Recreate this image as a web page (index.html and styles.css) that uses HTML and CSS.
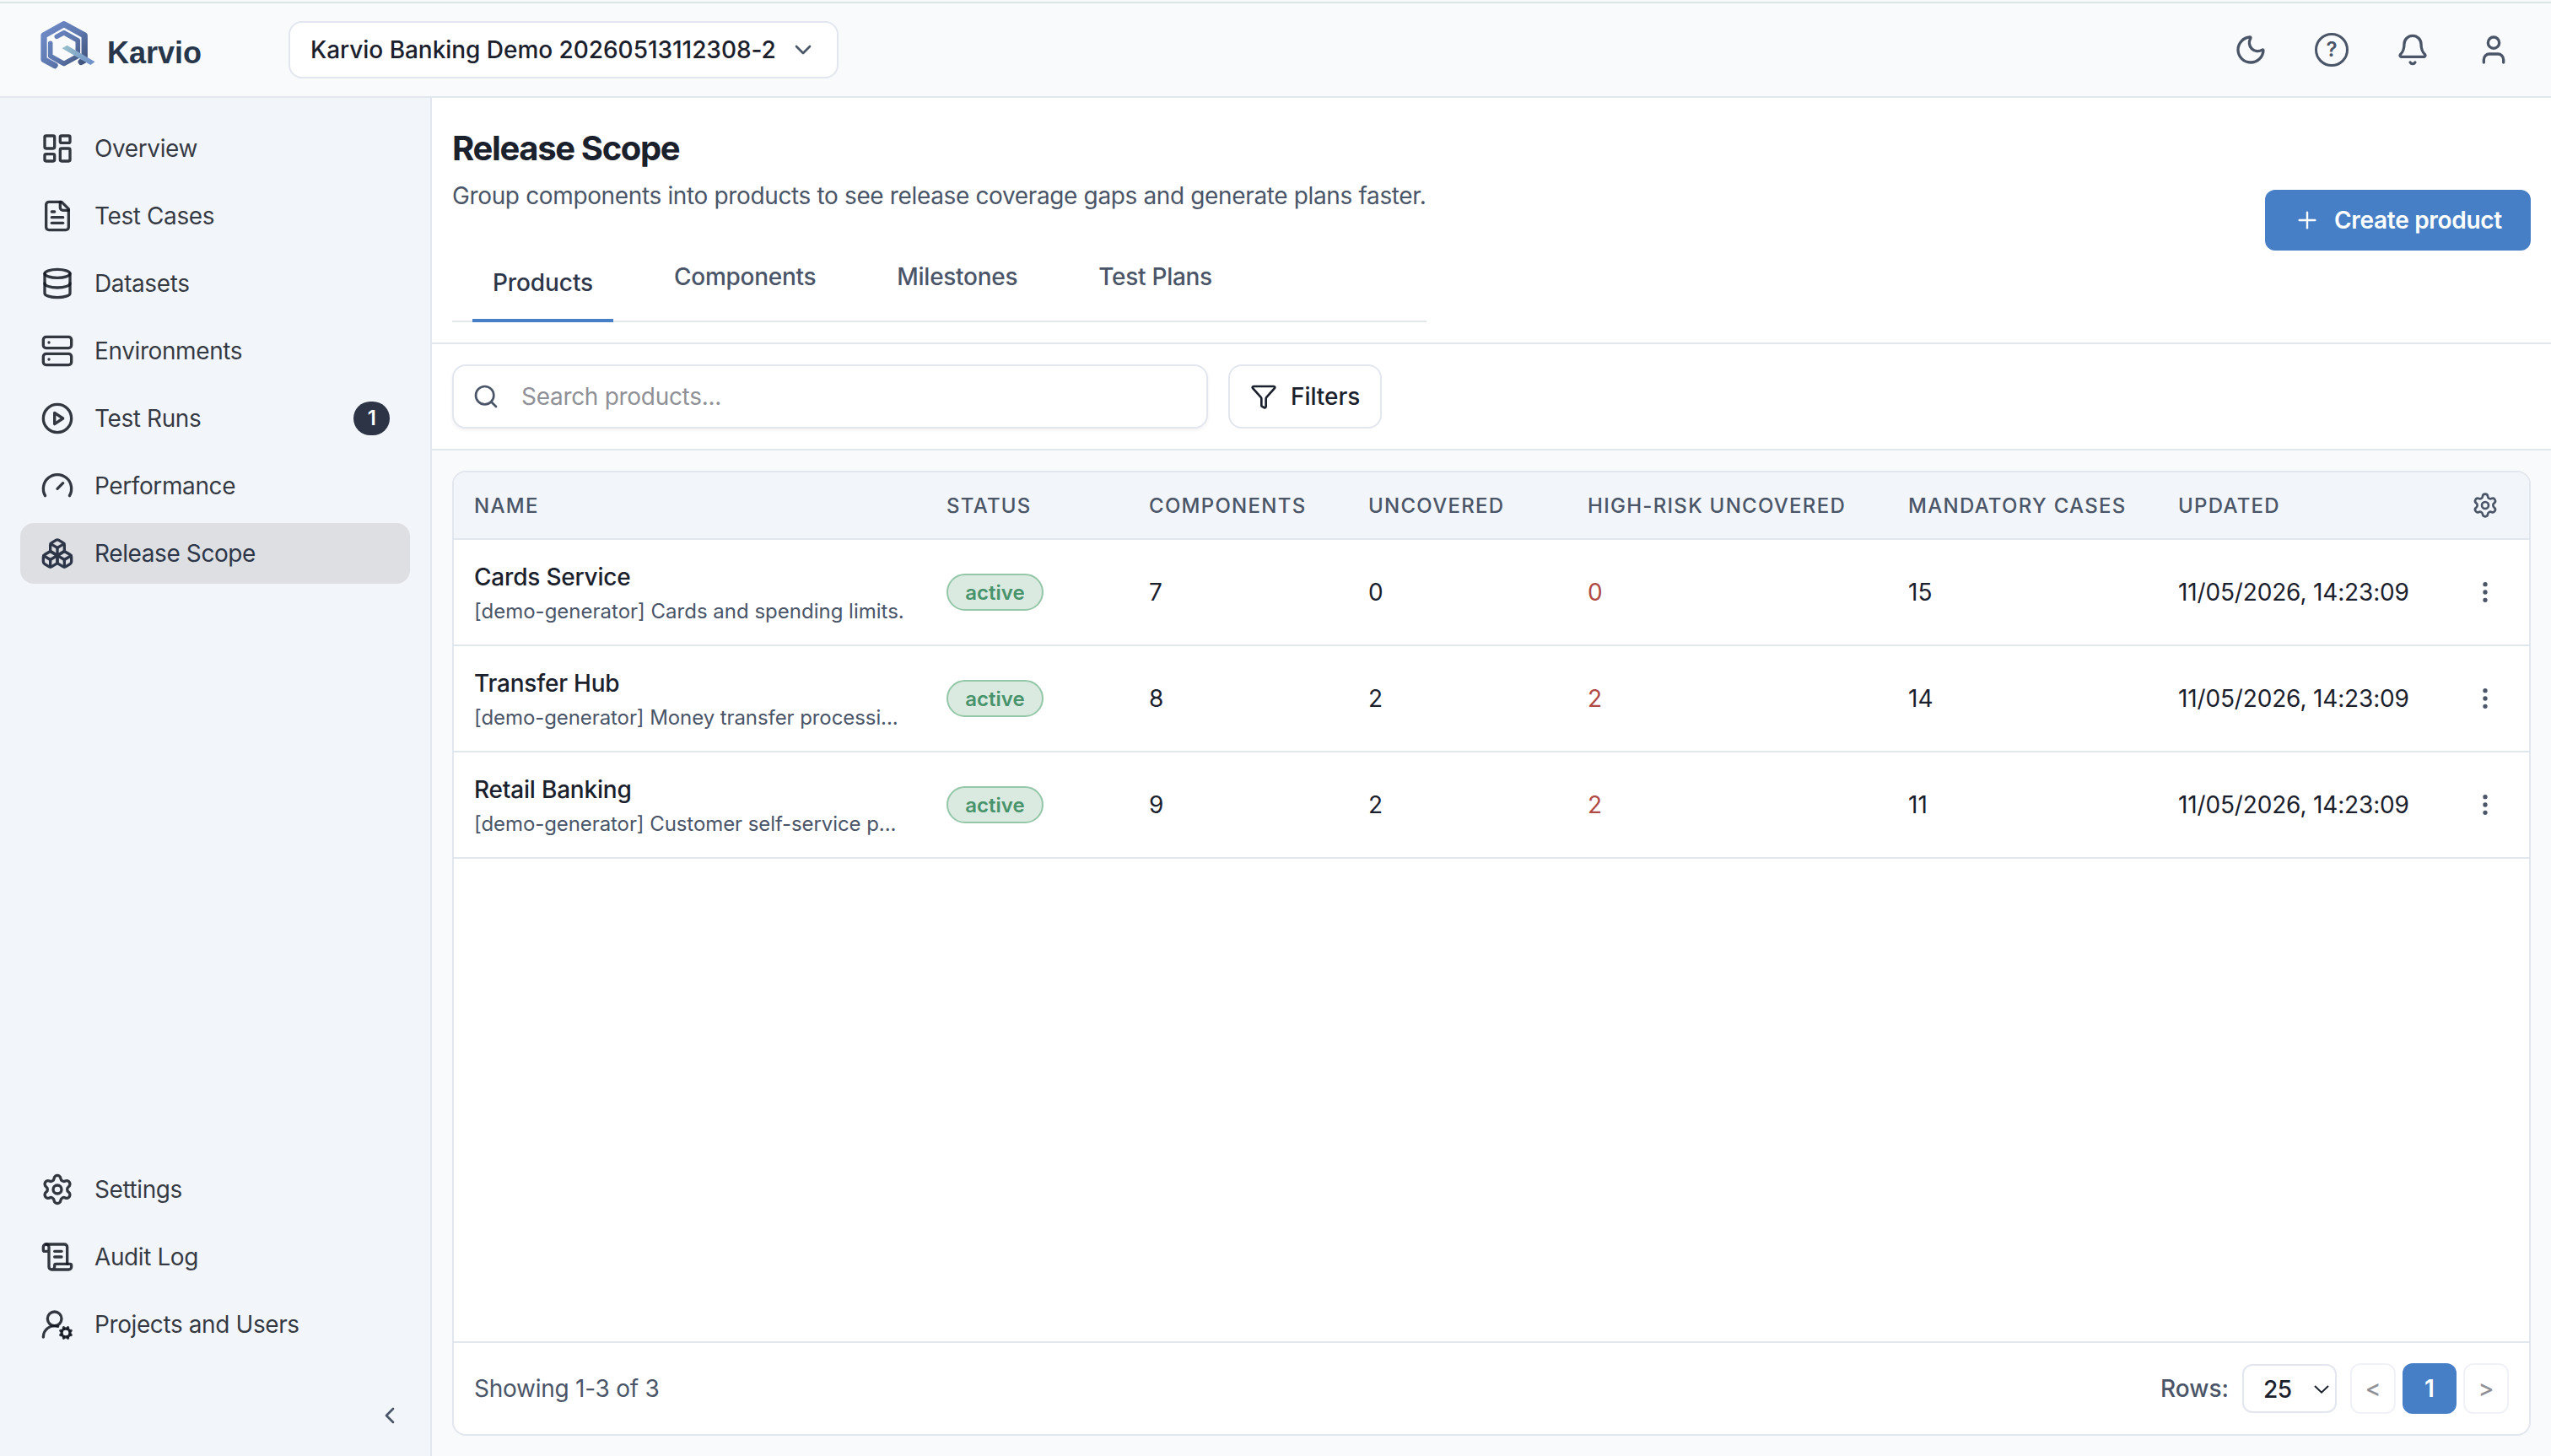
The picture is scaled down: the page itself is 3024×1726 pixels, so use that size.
FILE: index.html
```html
<!DOCTYPE html>
<html lang="en">
<head>
<meta charset="utf-8">
<title>Karvio – Release Scope</title>
<link rel="stylesheet" href="styles.css">
</head>
<body>
<div class="app">
  <header class="topbar">
    <div class="brand">
      <svg class="brand-mark" viewBox="48 24 66 60" fill="none" stroke-linecap="round" stroke-linejoin="round">
        <defs>
          <linearGradient id="hex" gradientUnits="userSpaceOnUse" x1="52" y1="34" x2="100" y2="76">
            <stop offset="0" stop-color="#6f89c6"/><stop offset=".55" stop-color="#5d77ae"/><stop offset="1" stop-color="#3f5278"/>
          </linearGradient>
          <linearGradient id="tail" gradientUnits="userSpaceOnUse" x1="75" y1="55" x2="111" y2="76">
            <stop offset="0" stop-color="#97c0ca"/><stop offset="1" stop-color="#6f8fc9"/>
          </linearGradient>
        </defs>
        <path stroke="url(#hex)" stroke-width="7.3" d="M65 77.6 52 70.6V42L75.8 28.6 100.2 42v29l-4 2.4"/>
        <path stroke="url(#hex)" stroke-width="5.6" d="M67.3 43.4l8.5-4.6 16.5 9.2v18.5l-16.5 9-16.1-9V51.4"/>
        <path fill="url(#tail)" d="M73.5 57.2l6-3.4 33 19.4-5.2 3.8z"/>
      </svg>
      <span class="brand-name">Karvio</span>
    </div>
    <button class="project-select">
      <span>Karvio Banking Demo 20260513112308-2</span>
      <svg class="icon icon-sm" viewBox="0 0 24 24"><path d="m6 9 6 6 6-6"/></svg>
    </button>
    <div class="top-actions">
      <svg class="icon" viewBox="0 0 24 24"><path d="M20.985 12.486a9 9 0 1 1-9.473-9.472c.405-.022.617.46.402.803a6 6 0 0 0 8.268 8.268c.344-.215.825-.004.803.401"/></svg>
      <span class="help">?</span>
      <svg class="icon" viewBox="0 0 24 24"><path d="M10.268 21a2 2 0 0 0 3.464 0"/><path d="M3.262 15.326A1 1 0 0 0 4 17h16a1 1 0 0 0 .74-1.673C19.41 13.956 18 12.499 18 8A6 6 0 0 0 6 8c0 4.499-1.411 5.956-2.738 7.326"/></svg>
      <svg class="icon" viewBox="0 0 24 24"><path d="M19 21v-2a4 4 0 0 0-4-4H9a4 4 0 0 0-4 4v2"/><circle cx="12" cy="7" r="4"/></svg>
    </div>
  </header>

  <div class="shell">
    <aside class="sidebar">
      <nav class="nav">
        <a class="nav-item"><svg class="icon" viewBox="0 0 24 24"><rect width="7" height="9" x="3" y="3" rx="1"/><rect width="7" height="5" x="14" y="3" rx="1"/><rect width="7" height="9" x="14" y="12" rx="1"/><rect width="7" height="5" x="3" y="16" rx="1"/></svg><span>Overview</span></a>
        <a class="nav-item"><svg class="icon" viewBox="0 0 24 24"><path d="M15 2H6a2 2 0 0 0-2 2v16a2 2 0 0 0 2 2h12a2 2 0 0 0 2-2V7Z"/><path d="M14 2v4a2 2 0 0 0 2 2h4"/><path d="M10 9H8"/><path d="M16 13H8"/><path d="M16 17H8"/></svg><span>Test Cases</span></a>
        <a class="nav-item"><svg class="icon" viewBox="0 0 24 24"><ellipse cx="12" cy="5" rx="9" ry="3"/><path d="M3 5V19A9 3 0 0 0 21 19V5"/><path d="M3 12A9 3 0 0 0 21 12"/></svg><span>Datasets</span></a>
        <a class="nav-item"><svg class="icon" viewBox="0 0 24 24"><rect width="20" height="8" x="2" y="2" rx="2"/><rect width="20" height="8" x="2" y="14" rx="2"/><path d="M6 6h.01"/><path d="M6 18h.01"/></svg><span>Environments</span></a>
        <a class="nav-item"><svg class="icon" viewBox="0 0 24 24"><circle cx="12" cy="12" r="10"/><path d="M10 8l6 4-6 4z"/></svg><span>Test Runs</span><b class="count">1</b></a>
        <a class="nav-item"><svg class="icon" viewBox="0 0 24 24"><path d="m12 14 4-4"/><path d="M3.34 19a10 10 0 1 1 17.32 0"/></svg><span>Performance</span></a>
        <a class="nav-item active"><svg class="icon" viewBox="0 0 24 24"><path d="M2.97 12.92A2 2 0 0 0 2 14.63v3.24a2 2 0 0 0 .97 1.71l3 1.8a2 2 0 0 0 2.06 0L12 19v-5.5l-5-3-4.03 2.42Z"/><path d="m7 16.5-4.74-2.85"/><path d="m7 16.5 5-3"/><path d="M7 16.5v5.17"/><path d="M12 13.5V19l3.97 2.38a2 2 0 0 0 2.06 0l3-1.8a2 2 0 0 0 .97-1.71v-3.24a2 2 0 0 0-.97-1.71L17 10.5l-5 3Z"/><path d="m17 16.5-5-3"/><path d="m17 16.5 4.74-2.85"/><path d="M17 16.5v5.17"/><path d="M7.97 4.42A2 2 0 0 0 7 6.13v4.37l5 3 5-3V6.13a2 2 0 0 0-.97-1.71l-3-1.8a2 2 0 0 0-2.06 0l-3 1.8Z"/><path d="M12 8 7.26 5.15"/><path d="m12 8 4.74-2.85"/><path d="M12 13.5V8"/></svg><span>Release Scope</span></a>
      </nav>
      <nav class="nav nav-bottom">
        <a class="nav-item"><svg class="icon" viewBox="0 0 24 24"><path d="M9.671 4.136a2.34 2.34 0 0 1 4.659 0 2.34 2.34 0 0 0 3.319 1.915 2.34 2.34 0 0 1 2.33 4.033 2.34 2.34 0 0 0 0 3.831 2.34 2.34 0 0 1-2.33 4.033 2.34 2.34 0 0 0-3.319 1.915 2.34 2.34 0 0 1-4.659 0 2.34 2.34 0 0 0-3.32-1.915 2.34 2.34 0 0 1-2.33-4.033 2.34 2.34 0 0 0 0-3.831A2.34 2.34 0 0 1 6.35 6.051a2.34 2.34 0 0 0 3.319-1.915"/><circle cx="12" cy="12" r="3"/></svg><span>Settings</span></a>
        <a class="nav-item"><svg class="icon" viewBox="0 0 24 24"><path d="M15 12h-5"/><path d="M15 8h-5"/><path d="M19 17V5a2 2 0 0 0-2-2H4"/><path d="M8 21h12a2 2 0 0 0 2-2v-1a1 1 0 0 0-1-1H11a1 1 0 0 0-1 1v1a2 2 0 1 1-4 0V5a2 2 0 1 0-4 0v2a1 1 0 0 0 1 1h3"/></svg><span>Audit Log</span></a>
        <a class="nav-item"><svg class="icon" viewBox="0 0 24 24"><path d="m14.305 19.53.923-.382"/><path d="m15.228 16.852-.923-.383"/><path d="m16.852 15.228-.383-.923"/><path d="m16.852 20.772-.383.924"/><path d="m19.148 15.228.383-.923"/><path d="m19.53 21.696-.382-.924"/><path d="M2 21a8 8 0 0 1 10.434-7.62"/><path d="m20.772 16.852.924-.383"/><path d="m20.772 19.148.924.383"/><circle cx="10" cy="8" r="5"/><circle cx="18" cy="18" r="3"/></svg><span>Projects and Users</span></a>
      </nav>
      <div class="collapse"><svg class="icon icon-sm" viewBox="0 0 24 24"><path d="m15 18-6-6 6-6"/></svg></div>
    </aside>

    <main class="main">
      <section class="page-head">
        <div class="head-text">
          <h1>Release Scope</h1>
          <p>Group components into products to see release coverage gaps and generate plans faster.</p>
          <div class="tabs">
            <a class="tab active">Products</a>
            <a class="tab">Components</a>
            <a class="tab">Milestones</a>
            <a class="tab">Test Plans</a>
          </div>
        </div>
        <button class="create"><svg class="icon icon-sm" viewBox="0 0 24 24"><path d="M5 12h14"/><path d="M12 5v14"/></svg><span>Create product</span></button>
      </section>

      <section class="filters">
        <label class="search"><svg class="icon icon-sm" viewBox="0 0 24 24"><circle cx="11" cy="11" r="8"/><path d="m21 21-4.34-4.34"/></svg><span>Search products...</span></label>
        <button class="filter-btn"><svg class="icon icon-sm" viewBox="0 0 24 24"><path d="M10 20a1 1 0 0 0 .553.895l2 1A1 1 0 0 0 14 21v-7a2 2 0 0 1 .517-1.341L21.74 4.67A1 1 0 0 0 21 3H3a1 1 0 0 0-.742 1.67l7.225 7.989A2 2 0 0 1 10 14z"/></svg><span>Filters</span></button>
      </section>

      <section class="content">
        <div class="card">
          <div class="row thead">
            <div>NAME</div><div>STATUS</div><div>COMPONENTS</div><div>UNCOVERED</div><div>HIGH-RISK UNCOVERED</div><div>MANDATORY CASES</div><div>UPDATED</div>
            <div class="menu"><svg class="icon icon-sm" viewBox="0 0 24 24"><path d="M9.671 4.136a2.34 2.34 0 0 1 4.659 0 2.34 2.34 0 0 0 3.319 1.915 2.34 2.34 0 0 1 2.33 4.033 2.34 2.34 0 0 0 0 3.831 2.34 2.34 0 0 1-2.33 4.033 2.34 2.34 0 0 0-3.319 1.915 2.34 2.34 0 0 1-4.659 0 2.34 2.34 0 0 0-3.32-1.915 2.34 2.34 0 0 1-2.33-4.033 2.34 2.34 0 0 0 0-3.831A2.34 2.34 0 0 1 6.35 6.051a2.34 2.34 0 0 0 3.319-1.915"/><circle cx="12" cy="12" r="3"/></svg></div>
          </div>
          <div class="row">
            <div><div class="name">Cards Service</div><div class="desc">[demo-generator] Cards and spending limits.</div></div>
            <div><span class="badge">active</span></div><div>7</div><div>0</div><div class="risk">0</div><div>15</div><div class="date">11/05/2026, 14:23:09</div>
            <div class="menu"><svg class="icon icon-sm" viewBox="0 0 24 24"><circle cx="12" cy="12" r="1"/><circle cx="12" cy="5" r="1"/><circle cx="12" cy="19" r="1"/></svg></div>
          </div>
          <div class="row">
            <div><div class="name">Transfer Hub</div><div class="desc trimmed">[demo-generator] Money transfer processi...</div></div>
            <div><span class="badge">active</span></div><div>8</div><div>2</div><div class="risk">2</div><div>14</div><div class="date">11/05/2026, 14:23:09</div>
            <div class="menu"><svg class="icon icon-sm" viewBox="0 0 24 24"><circle cx="12" cy="12" r="1"/><circle cx="12" cy="5" r="1"/><circle cx="12" cy="19" r="1"/></svg></div>
          </div>
          <div class="row">
            <div><div class="name">Retail Banking</div><div class="desc trimmed">[demo-generator] Customer self-service p...</div></div>
            <div><span class="badge">active</span></div><div>9</div><div>2</div><div class="risk">2</div><div>11</div><div class="date">11/05/2026, 14:23:09</div>
            <div class="menu"><svg class="icon icon-sm" viewBox="0 0 24 24"><circle cx="12" cy="12" r="1"/><circle cx="12" cy="5" r="1"/><circle cx="12" cy="19" r="1"/></svg></div>
          </div>
          <footer class="pager">
            <span class="showing">Showing 1-3 of 3</span>
            <span class="rows-label">Rows:</span>
            <span class="rows-select">25<svg class="caret" viewBox="0 0 18 10"><path d="M1 1l8 7.6L17 1"/></svg></span>
            <span class="page prev">&lt;</span>
            <span class="page current">1</span>
            <span class="page next">&gt;</span>
          </footer>
        </div>
      </section>
    </main>
  </div>
</div>
</body>
</html>
```
FILE: styles.css
```css
* { box-sizing: border-box; }

body {
  margin: 0;
  font-family: Inter, "Liberation Sans", sans-serif;
  font-size: 28px;
  line-height: 42px;
  color: #1a202c;
  background: #f9fafc;
}

h1, p { margin: 0; }
button { font: inherit; color: inherit; background: none; margin: 0; padding: 0; }

.icon {
  display: block;
  flex: none;
  width: 40px;
  height: 40px;
  fill: none;
  stroke: currentColor;
  stroke-width: 2;
  stroke-linecap: round;
  stroke-linejoin: round;
}
.icon-sm { width: 32px; height: 32px; }

.app { display: flex; flex-direction: column; height: 1726px; width: 3024px; border-top: 2px solid #f7fafb; }

/* Top bar */
.topbar {
  display: flex;
  align-items: center;
  flex: none;
  height: 114px;
  padding: 0 48px;
  border-top: 2px solid #dde6e7;
  border-bottom: 2px solid #e2e7ee;
  background: #f9fafc;
}
.brand { display: flex; align-items: center; width: 294px; gap: 13px; }
.brand-mark { width: 66px; height: 60px; margin-top: -10px; }
.brand-name {
  padding-top: 7px;
  font-family: "Liberation Sans", Arial, sans-serif;
  font-size: 36px;
  font-weight: 700;
  color: #27364b;
}
.project-select {
  display: flex;
  align-items: center;
  justify-content: space-between;
  width: 652px;
  height: 68px;
  padding: 0 24px;
  border: 2px solid #e2e6ee;
  border-radius: 16px;
  background: #fff;
  font-weight: 500;
  letter-spacing: -0.04px;
  white-space: nowrap;
}
.project-select .icon { color: #4a5568; }
.top-actions { display: flex; align-items: center; gap: 56px; margin-left: auto; color: #4a5568; }
.help {
  display: flex;
  align-items: center;
  justify-content: center;
  width: 40px;
  height: 40px;
  border: 3px solid #4a5568;
  border-radius: 50%;
  font-size: 24px;
  font-weight: 600;
  line-height: 34px;
}

/* Sidebar */
.shell { display: flex; flex: 1; min-height: 0; }
.sidebar {
  display: flex;
  flex-direction: column;
  flex: none;
  width: 512px;
  padding: 24px 24px 32px;
  border-right: 2px solid #e2e6ee;
  background: #f2f5fa;
}
.nav { display: flex; flex-direction: column; gap: 8px; }
.nav-bottom { margin-top: auto; }
.nav-item {
  display: flex;
  align-items: center;
  gap: 24px;
  height: 72px;
  padding: 0 24px;
  border-radius: 16px;
  letter-spacing: -0.4px;
  color: rgba(17, 21, 31, 0.85);
}
.nav-item.active { background: #dedfe3; color: #2d3648; }
.count {
  display: flex;
  align-items: center;
  justify-content: center;
  width: 43px;
  height: 40px;
  margin-left: auto;
  border-radius: 20px;
  background: #2d3446;
  color: #fff;
  font-size: 24px;
  font-weight: 600;
}
.collapse { display: flex; justify-content: flex-end; margin-top: 56px; padding-right: 8px; color: #4a5568; }

/* Page header */
.main { display: flex; flex-direction: column; flex: 1; min-width: 0; }
.page-head {
  display: flex;
  align-items: center;
  justify-content: space-between;
  padding: 24px;
  border-bottom: 2px solid #e2e7ee;
  background: #fff;
}
.head-text { width: 1155px; }
h1 { font-size: 40px; font-weight: 700; line-height: 71px; letter-spacing: -1.35px; }
.head-text p { color: #4a5568; letter-spacing: -0.36px; white-space: nowrap; }
.tabs {
  display: flex;
  align-items: flex-start;
  gap: 48px;
  height: 104px;
  margin-top: 25px;
  padding: 0 24px;
  border-bottom: 2px solid #e2e7ee;
}
.tab { padding: 0 24px; line-height: 100px; font-weight: 500; letter-spacing: -0.28px; color: #4a5568; }
.tab.active {
  height: 104px;
  padding-top: 36px;
  line-height: 42px;
  border-bottom: 4px solid #477fc7;
  color: #2d3648;
  letter-spacing: -0.1px;
}
.create {
  display: flex;
  align-items: center;
  gap: 16px;
  width: 315px;
  height: 72px;
  padding: 0 34px;
  border: 0;
  border-radius: 12px;
  background: #477fc7;
  color: #fff;
  font-weight: 600;
  letter-spacing: -0.3px;
  white-space: nowrap;
}
.create .icon { stroke-width: 1.8; }

/* Search and filters */
.filters { display: flex; gap: 24px; padding: 24px; border-bottom: 2px solid #e2e7ee; background: #fff; }
.search, .filter-btn {
  display: flex;
  align-items: center;
  height: 76px;
  padding: 0 22px;
  border: 2px solid #e2e6ee;
  border-radius: 16px;
  background: #fff;
}
.search { width: 896px; gap: 26px; box-shadow: 0 2px 4px rgba(0, 0, 0, 0.06); color: #8f9197; letter-spacing: -0.3px; }
.search .icon { color: #4a5568; }
.filter-btn { width: 182px; padding: 0 24px; gap: 16px; font-weight: 500; letter-spacing: -0.05px; }

/* Products table */
.content { display: flex; flex: 1; min-height: 0; padding: 24px; }
.card {
  display: flex;
  flex-direction: column;
  width: 2464px;
  border: 2px solid #e2e6ee;
  border-radius: 16px;
  background: #fff;
  overflow: hidden;
}
.row {
  display: grid;
  grid-template-columns: 560px 240px 260px 260px 380px 320px 336px 104px;
  align-items: center;
  flex: none;
  height: 126px;
  border-bottom: 2px solid #e2e7ee;
}
.row > div { padding-left: 24px; }
.row > .menu { display: flex; justify-content: center; padding: 0; color: #4a5568; }
.thead {
  height: 80px;
  background: #f2f5fa;
  color: #4a5568;
  font-size: 24px;
  line-height: 43px;
  font-weight: 500;
  letter-spacing: 1.28px;
}
.thead > div:not(.menu) { padding-top: 1px; }
.name { line-height: 44px; font-weight: 500; letter-spacing: -0.2px; }
.desc { padding-top: 1px; font-size: 24px; line-height: 36px; color: #4a5568; white-space: nowrap; }
.desc.trimmed { letter-spacing: -0.08px; }
.badge {
  display: flex;
  align-items: center;
  justify-content: center;
  width: 115px;
  height: 44px;
  padding-top: 1px;
  border: 2px solid #93c7a8;
  border-radius: 22px;
  background: #dbeae1;
  color: #47936b;
  font-size: 24px;
  font-weight: 600;
}
.risk { color: #b04a45; }
.date { letter-spacing: -0.15px; }

/* Pagination */
.pager {
  display: flex;
  align-items: center;
  flex: none;
  height: 110px;
  margin-top: auto;
  padding: 0 24px;
  border-top: 2px solid #e2e7ee;
}
.showing { margin-right: auto; color: #4a5568; letter-spacing: -0.25px; }
.rows-label { margin-right: 16px; font-weight: 500; color: #4a5568; }
.rows-select {
  display: flex;
  align-items: center;
  justify-content: space-between;
  width: 112px;
  height: 58px;
  margin-right: 16px;
  padding: 1px 7px 0 23px;
  border: 2px solid #e2e6ee;
  border-radius: 12px;
  font-weight: 500;
  letter-spacing: -0.5px;
}
.caret { width: 18px; height: 10px; fill: none; stroke: #1a202c; stroke-width: 2; }
.page {
  display: flex;
  align-items: center;
  justify-content: center;
  width: 54px;
  height: 60px;
  border: 2px solid #f1f2f7;
  border-radius: 12px;
  color: #8f9197;
  font-weight: 500;
}
.page.current { width: 64px; margin: 0 8px; border: 0; background: #477fc7; color: #fff; font-weight: 600; }
```
